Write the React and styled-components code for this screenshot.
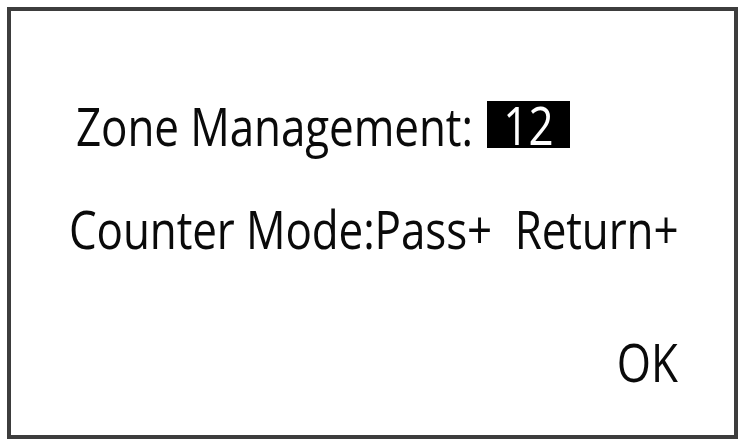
import React from 'react';
import styled, { createGlobalStyle } from 'styled-components';

const GlobalStyle = createGlobalStyle`
  html, body {
    margin: 0;
    padding: 0;
    background: #ffffff;
    overflow: hidden;
  }
  body {
    font-family: "Open Sans", "Liberation Sans", sans-serif;
    color: #0a0a0a;
  }
`;

const Screen = styled.div`
  box-sizing: border-box;
  margin: 7px 0 0 7px;
  width: 731px;
  height: 432px;
  border: 4px solid #3d3d3d;
  display: flex;
  flex-direction: column;
`;

const Row = styled.div`
  display: flex;
  align-items: flex-start;
  height: 47px;
  margin-top: ${p => p.$top}px;
  padding-left: ${p => p.$left || 0}px;
  padding-right: ${p => p.$right || 0}px;
  justify-content: ${p => (p.$end ? 'flex-end' : 'flex-start')};
`;

// LCD-style text is tall and narrow, so the glyphs get stretched vertically
const Label = styled.span`
  display: inline-block;
  font-size: 44px;
  line-height: 47px;
  margin-top: 2px;
  white-space: pre;
  letter-spacing: ${p => p.$spacing || 0}px;
  transform: scaleY(1.2);
  transform-origin: 0 50%;
`;

const Value = styled.span`
  display: flex;
  align-items: center;
  justify-content: center;
  width: 83px;
  height: 47px;
  margin-left: ${p => p.$gap}px;
  background: #000000;
  color: #ffffff;
`;

export default function App() {
  return (
    <>
      <GlobalStyle />
      <Screen>
        <Row $top={90} $left={65}>
          <Label $spacing={-0.1}>Zone Management:</Label>
          <Value $gap={14}>
            <Label>12</Label>
          </Value>
        </Row>
        <Row $top={56} $left={58}>
          <Label $spacing={-0.12}>Counter Mode:Pass+  Return+</Label>
        </Row>
        <Row $top={86} $right={56} $end>
          <Label>OK</Label>
        </Row>
      </Screen>
    </>
  );
}
